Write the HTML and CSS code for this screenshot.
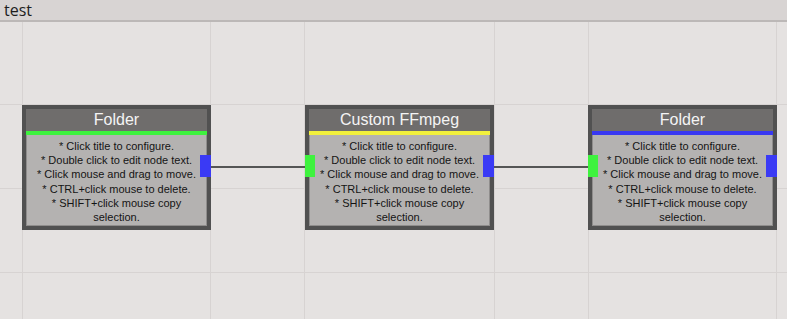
FILE: index.html
```html
<!DOCTYPE html>
<html>
<head>
<meta charset="utf-8">
<title>test</title>
<link rel="stylesheet" href="styles.css">
</head>
<body>
<div class="app">
  <header class="tabbar">test</header>
  <main class="canvas">
    <div class="flow">
      <div class="node">
        <div class="node-title">Folder</div>
        <div class="node-bar bar-green"></div>
        <div class="node-body">* Click title to configure.<br>* Double click to edit node text.<br>* Click mouse and drag to move.<br>* CTRL+click mouse to delete.<br>* SHIFT+click mouse copy selection.</div>
        <span class="port port-out"></span>
      </div>
      <div class="link"></div>
      <div class="node">
        <div class="node-title">Custom FFmpeg</div>
        <div class="node-bar bar-yellow"></div>
        <div class="node-body">* Click title to configure.<br>* Double click to edit node text.<br>* Click mouse and drag to move.<br>* CTRL+click mouse to delete.<br>* SHIFT+click mouse copy selection.</div>
        <span class="port port-in"></span>
        <span class="port port-out"></span>
      </div>
      <div class="link"></div>
      <div class="node">
        <div class="node-title">Folder</div>
        <div class="node-bar bar-blue"></div>
        <div class="node-body">* Click title to configure.<br>* Double click to edit node text.<br>* Click mouse and drag to move.<br>* CTRL+click mouse to delete.<br>* SHIFT+click mouse copy selection.</div>
        <span class="port port-in"></span>
        <span class="port port-out"></span>
      </div>
    </div>
  </main>
</div>
</body>
</html>
```
FILE: styles.css
```css
html, body {
  margin: 0;
  padding: 0;
}
body {
  width: 787px;
  height: 319px;
  overflow: hidden;
  background: #e5e2e1;
}
.app {
  display: flex;
  flex-direction: column;
  height: 319px;
}
.tabbar {
  height: 20px;
  line-height: 20px;
  padding-left: 4px;
  background: #d8d4d3;
  border-bottom: 2px solid #bcb8b7;
  font-family: "Open Sans", "Noto Sans", sans-serif;
  font-size: 16px;
  color: #1e1e1e;
  flex: none;
}
.canvas {
  flex: 1;
  background-color: #e5e2e1;
  background-image:
    linear-gradient(to right,
      transparent 22px, #d7d3d2 22px, #d7d3d2 23px,
      transparent 23px, transparent 210px, #d7d3d2 210px, #d7d3d2 211px,
      transparent 211px, transparent 304px, #d7d3d2 304px, #d7d3d2 305px,
      transparent 305px, transparent 494px, #d7d3d2 494px, #d7d3d2 495px,
      transparent 495px, transparent 588px, #d7d3d2 588px, #d7d3d2 589px,
      transparent 589px, transparent 776px, #d7d3d2 776px, #d7d3d2 777px,
      transparent 777px),
    repeating-linear-gradient(to bottom,
      transparent 0, transparent 82px, #d7d3d2 82px, #d7d3d2 83px,
      transparent 83px, transparent 84px);
}
.flow {
  display: flex;
  align-items: flex-start;
  padding: 83px 0 0 22px;
}
.node {
  position: relative;
  flex: none;
  width: 189px;
  box-sizing: border-box;
  border: 4px solid #515151;
  background: #b4b2b1;
  font-family: "Liberation Sans", Arial, sans-serif;
}
.node-title {
  height: 22px;
  line-height: 22px;
  background: #6f6d6c;
  color: #f4f4f4;
  font-size: 16px;
  text-align: center;
}
.node-bar {
  height: 4px;
}
.bar-green { background: #3ef23e; }
.bar-yellow { background: #f2f03c; }
.bar-blue { background: #3838f2; }
.node-body {
  padding: 4px 3px 1px;
  border: 1px solid #8f8d8c;
  border-top: none;
  font-size: 11px;
  line-height: 14.2px;
  color: #141414;
  text-align: center;
}
.port {
  position: absolute;
  top: 46px;
  width: 11px;
  height: 22px;
}
.port-out {
  right: -4px;
  background: #3a3af5;
}
.port-in {
  left: -4px;
  width: 10px;
  background: #3ef23e;
}
.link {
  flex: none;
  width: 94px;
  height: 2px;
  margin-top: 61px;
  background: #555555;
}
```
